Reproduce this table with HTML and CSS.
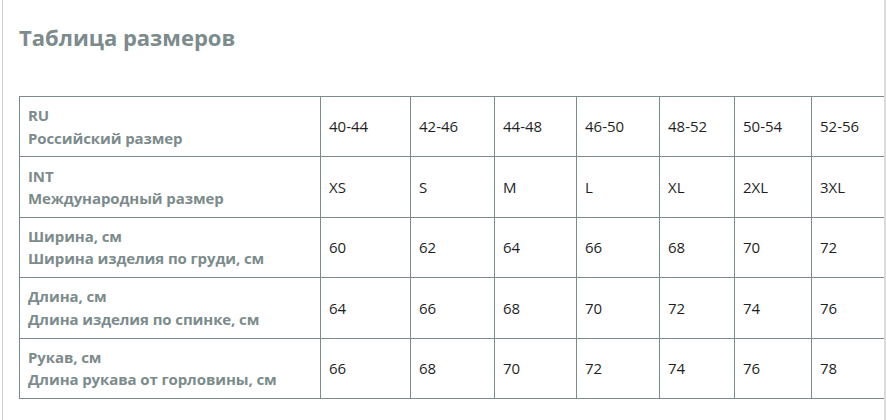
FILE: index.html
```html
<!DOCTYPE html>
<html lang="ru">
<head>
<meta charset="utf-8">
<title>Таблица размеров</title>
<link rel="stylesheet" href="styles.css">
</head>
<body>
<div class="panel">
  <h2 class="title">Таблица размеров</h2>
  <table class="sizes">
    <colgroup>
      <col class="c-head">
      <col class="c1">
      <col class="c2">
      <col class="c3">
      <col class="c4">
      <col class="c5">
      <col class="c6">
      <col class="c7">
    </colgroup>
    <tbody>
      <tr>
        <th>RU<br>Российский размер</th>
        <td>40-44</td><td>42-46</td><td>44-48</td><td>46-50</td><td>48-52</td><td>50-54</td><td>52-56</td>
      </tr>
      <tr>
        <th>INT<br>Международный размер</th>
        <td>XS</td><td>S</td><td>M</td><td>L</td><td>XL</td><td>2XL</td><td>3XL</td>
      </tr>
      <tr>
        <th>Ширина, см<br>Ширина изделия по груди, см</th>
        <td>60</td><td>62</td><td>64</td><td>66</td><td>68</td><td>70</td><td>72</td>
      </tr>
      <tr>
        <th>Длина, см<br>Длина изделия по спинке, см</th>
        <td>64</td><td>66</td><td>68</td><td>70</td><td>72</td><td>74</td><td>76</td>
      </tr>
      <tr>
        <th>Рукав, см<br>Длина рукава от горловины, см</th>
        <td>66</td><td>68</td><td>70</td><td>72</td><td>74</td><td>76</td><td>78</td>
      </tr>
    </tbody>
  </table>
</div>
</body>
</html>
```

FILE: styles.css
```css
html, body {
  margin: 0;
  padding: 0;
  background: #ffffff;
}

body {
  font-family: "Open Sans", "Noto Sans", "DejaVu Sans", sans-serif;
}

.panel {
  margin-left: 2px;
  width: 884px;
  height: 420px;
  box-sizing: border-box;
  border-left: 1px solid #d2d2d2;
  border-right: 2px solid #dcdcdc;
  padding-left: 16px;
  overflow: hidden;
}

.title {
  margin: 21px 0 43px 0;
  font-size: 22px;
  line-height: 32px;
  font-weight: 700;
  color: #7c8b8b;
}

.sizes {
  border-collapse: collapse;
  table-layout: fixed;
  width: 873px;
  font-size: 15px;
  line-height: 22.5px;
}

.c-head { width: 301px; }
.c1 { width: 90px; }
.c2 { width: 84px; }
.c3 { width: 82px; }
.c4 { width: 83px; }
.c5 { width: 75px; }
.c6 { width: 77px; }
.c7 { width: 80px; }

.sizes th,
.sizes td {
  border: 1px solid #7b8a8b;
  padding: 7.2px 8px;
  vertical-align: middle;
  text-align: left;
  white-space: nowrap;
}

.sizes th {
  font-weight: 700;
  color: #7c8b8b;
  letter-spacing: -0.1px;
}

.sizes td {
  font-weight: 400;
  color: #1f1f1f;
}
```
